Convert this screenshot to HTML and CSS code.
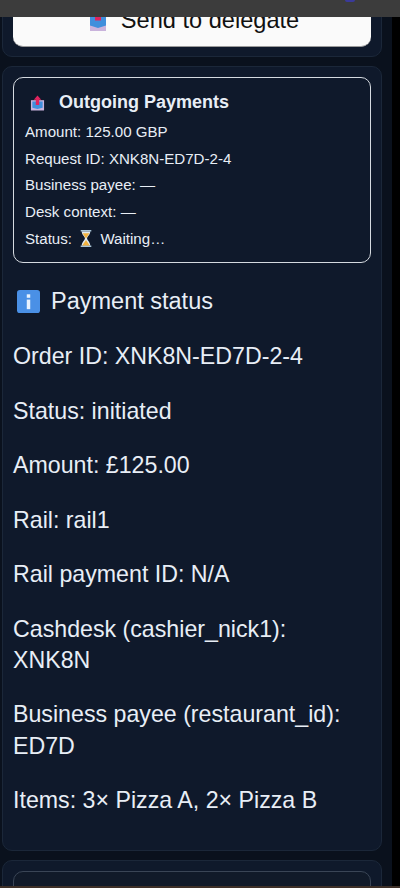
FILE: index.html
```html
<!DOCTYPE html>
<html lang="en">
<head>
<meta charset="utf-8">
<title>Payment status</title>
<link rel="stylesheet" href="styles.css">
</head>
<body>
<div class="topbar" aria-hidden="true"><span class="topbar-dot"></span></div>
<div class="viewport">
  <main class="page">
    <section class="card card-first">
      <button class="send-btn" type="button">
        <svg class="ico-send" viewBox="0 0 18 18"><path d="M1 12h16v6H1z" fill="#c9b3dc"/><path d="M1 0h16v12.500L9 15 1 12.500z" fill="#3f8fdc"/><path d="M6 0h6v7.500H6z" fill="#e0245e"/></svg>
        <span>Send to delegate</span>
      </button>
    </section>
    <section class="card card-main">
      <div class="outgoing">
        <h3 class="outgoing-title">
          <svg class="ico-out" viewBox="0 0 16 16"><path d="M1 5h14v11H1z" fill="#c9b3dc"/><path d="M2.500 6.500h11V13L8 14.500 2.500 13z" fill="#3f8fdc"/><path d="M8 0l4 4.500H9.800V10H6.200V4.500H4z" fill="#e0245e"/></svg>
          <span>Outgoing Payments</span>
        </h3>
        <div class="line">Amount: 125.00 GBP</div>
        <div class="line">Request ID: XNK8N-ED7D-2-4</div>
        <div class="line">Business payee: —</div>
        <div class="line">Desk context: —</div>
        <div class="line">Status:
          <svg class="ico-hour" viewBox="0 0 12 16"><path d="M1 0h10v1.500H1zM1 14.500h10V16H1z" fill="#a9c4d6"/><path d="M2 1.500h8c0 3-3 5-3 6.500s3 3.500 3 6.500H2c0-3 3-5 3-6.500s-3-3.500-3-6.500z" fill="#dfeaf0"/><path d="M2.800 3h6.400L6 8zM2.500 14.500L6 9.500l3.500 5z" fill="#f2b23e"/></svg>
          Waiting…</div>
      </div>
      <h2 class="status-title">
        <svg class="ico-info" viewBox="0 0 24 24"><rect width="24" height="24" rx="3" fill="#4a90e6"/><rect x="10.200" y="10" width="3.600" height="10" fill="#eaf3ff"/><rect x="10.200" y="4.500" width="3.600" height="3.600" fill="#eaf3ff"/></svg>
        <span>Payment status</span>
      </h2>
      <p class="row">Order ID: XNK8N-ED7D-2-4</p>
      <p class="row">Status: initiated</p>
      <p class="row">Amount: £125.00</p>
      <p class="row">Rail: rail1</p>
      <p class="row">Rail payment ID: N/A</p>
      <p class="row">Cashdesk (cashier_nick1): XNK8N</p>
      <p class="row">Business payee (restaurant_id): ED7D</p>
      <p class="row">Items: 3× Pizza A, 2× Pizza B</p>
    </section>
    <section class="card card-last">
      <div class="next-box"></div>
    </section>
  </main>
  <div class="scrollbar" aria-hidden="true"></div>
</div>
<div class="bottom-line" aria-hidden="true"></div>
</body>
</html>
```

FILE: styles.css
```css
* { box-sizing: border-box; }
html, body { margin: 0; height: 100%; overflow: hidden; }
body {
  background: #0a111d;
  color: #e8eef6;
  font-family: "Liberation Sans", Arial, sans-serif;
  position: relative;
}
.topbar {
  position: absolute;
  top: 0; left: 0; right: 0;
  height: 17px;
  background: #3c3c3c;
  z-index: 2;
}
.topbar-dot {
  position: absolute;
  top: 0; left: 345px;
  width: 10px; height: 2px;
  border-radius: 0 0 5px 5px;
  background: #3a3a9a;
}
.bottom-line {
  position: absolute;
  left: 0; right: 0; bottom: 0;
  height: 2px;
  background: #3e3028;
  z-index: 2;
}
.viewport { display: flex; height: 888px; overflow: hidden; }
.page {
  width: 392px;
  height: 888px;
  padding: 0 10px 0 2px;
  background: #0a111d;
  overflow: hidden;
}
.card {
  background: #0f192b;
  border: 1px solid #1b2739;
  border-radius: 10px;
  padding: 10px;
  margin-bottom: 9px;
}
.card-first { margin-top: -60px; height: 117px; padding-top: 61px; }
.card-main { height: 785px; }
.card-last { height: 120px; }
.scrollbar { width: 8px; background: #000; }
.send-btn {
  display: flex;
  align-items: center;
  justify-content: center;
  gap: 14px;
  width: 100%;
  height: 46px;
  margin-top: -1px;
  padding: 0 0 6px 4px;
  border: 0;
  border-bottom: 1px solid #9a9a9a;
  border-radius: 10px;
  background: #fafafa;
  color: #111;
  font: 23.600px "Liberation Sans", Arial, sans-serif;
}
.ico-send { width: 18px; height: 18px; margin-top: 2px; }
.outgoing {
  border: 1px solid #d5dae0;
  border-radius: 10px;
  padding: 12px 11px 0;
  height: 186px;
  color: #e8eef6;
}
.outgoing-title {
  display: flex;
  align-items: center;
  gap: 14px;
  margin: 0 0 5px;
  font-size: 18px;
  font-weight: 700;
  line-height: 24px;
  padding-left: 5px;
}
.ico-out { width: 15px; height: 16px; flex: none; margin-top: 2px; }
.line { font-size: 15.100px; line-height: 26.700px; }
.ico-hour { width: 14px; height: 17px; vertical-align: -3px; margin: 0 3px; }
.status-title {
  display: flex;
  align-items: center;
  gap: 11px;
  margin: 24px 0 0 4px;
  font-size: 23.500px;
  font-weight: 400;
  line-height: 28px;
}
.ico-info { width: 23px; height: 23px; }
.row {
  margin: 23.200px 0 0;
  padding-right: 6px;
  font-size: 23.200px;
  line-height: 31.320px;
}
.status-title + .row { margin-top: 26px; }
.next-box {
  height: 100px;
  border: 1px solid #3a4556;
  border-radius: 10px;
  background: #111a29;
}
```
